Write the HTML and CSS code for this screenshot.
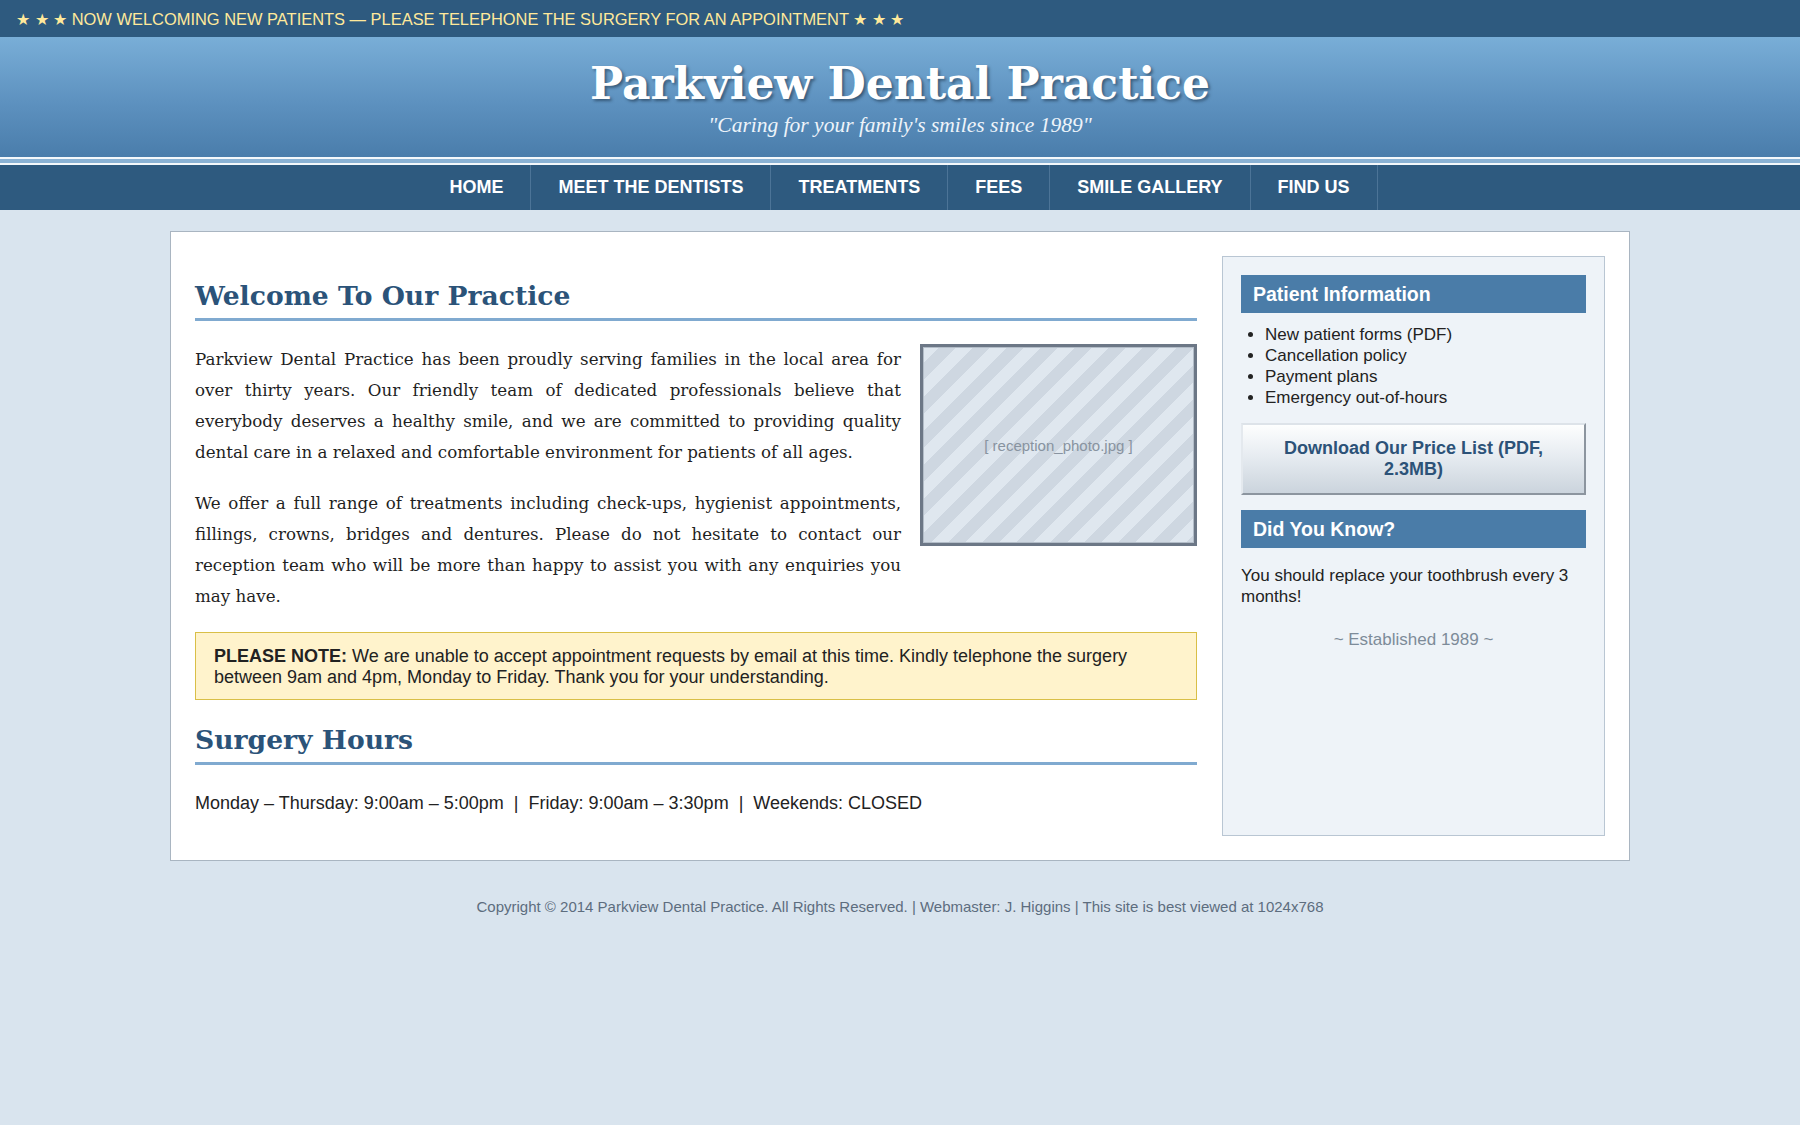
FILE: index.html
```html
<!DOCTYPE html>
<html lang="en">
<head>
<meta charset="utf-8">
<title>Parkview Dental Practice</title>
<link rel="stylesheet" href="styles.css">
</head>
<body>
  <div class="announce">&#9733; &#9733; &#9733; NOW WELCOMING NEW PATIENTS &mdash; PLEASE TELEPHONE THE SURGERY FOR AN APPOINTMENT &#9733; &#9733; &#9733;</div>

  <header class="masthead">
    <h1 class="site-title">Parkview Dental Practice</h1>
    <p class="tagline">"Caring for your family's smiles since 1989"</p>
  </header>
  <div class="masthead-rule"></div>

  <nav class="mainnav">
    <a href="#">HOME</a>
    <a href="#">MEET THE DENTISTS</a>
    <a href="#">TREATMENTS</a>
    <a href="#">FEES</a>
    <a href="#">SMILE GALLERY</a>
    <a href="#">FIND US</a>
  </nav>

  <div class="page">
    <main class="content">
      <h2 class="section-title">Welcome To Our Practice</h2>
      <div class="photo"><span>[ reception_photo.jpg ]</span></div>
      <p class="copy">Parkview Dental Practice has been proudly serving families in the local area for over thirty years. Our friendly team of dedicated professionals believe that everybody deserves a healthy smile, and we are committed to providing quality dental care in a relaxed and comfortable environment for patients of all ages.</p>
      <p class="copy">We offer a full range of treatments including check-ups, hygienist appointments, fillings, crowns, bridges and dentures. Please do not hesitate to contact our reception team who will be more than happy to assist you with any enquiries you may have.</p>

      <div class="notice"><strong>PLEASE NOTE:</strong> We are unable to accept appointment requests by email at this time. Kindly telephone the surgery between 9am and 4pm, Monday to Friday. Thank you for your understanding.</div>

      <h2 class="section-title">Surgery Hours</h2>
      <p class="hours">Monday &ndash; Thursday: 9:00am &ndash; 5:00pm &nbsp;|&nbsp; Friday: 9:00am &ndash; 3:30pm &nbsp;|&nbsp; Weekends: CLOSED</p>
    </main>

    <aside class="sidebar">
      <h3 class="side-title">Patient Information</h3>
      <ul class="side-list">
        <li>New patient forms (PDF)</li>
        <li>Cancellation policy</li>
        <li>Payment plans</li>
        <li>Emergency out-of-hours</li>
      </ul>
      <a class="download" href="#">Download Our Price List (PDF, 2.3MB)</a>
      <h3 class="side-title">Did You Know?</h3>
      <p class="side-text">You should replace your toothbrush every 3 months!</p>
      <p class="established">~ Established 1989 ~</p>
    </aside>
  </div>

  <footer class="footer">Copyright &copy; 2014 Parkview Dental Practice. All Rights Reserved. | Webmaster: J. Higgins | This site is best viewed at 1024x768</footer>
</body>
</html>
```

FILE: styles.css
```css
/* Parkview Dental Practice - main stylesheet */

body {
  margin: 0;
  background: #d9e4ee;
  font-family: "Liberation Sans", Arial, sans-serif;
  color: #222;
}

/* announcement strip */
.announce {
  height: 36px;
  padding: 1px 16px 0;
  line-height: 37px;
  overflow: hidden;
  background: #2e5a7f;
  color: #ffe99b;
  font-size: 16.45px;
  white-space: nowrap;
}

/* masthead */
.masthead {
  background: linear-gradient(to bottom, #79aed7 0%, #5d91bf 55%, #4a7dab 100%);
  text-align: center;
  padding: 20px 0 19px;
}

.site-title {
  margin: 0;
  font-family: "DejaVu Serif", Georgia, serif;
  font-weight: bold;
  font-size: 44px;
  line-height: 53px;
  color: #fff;
  text-shadow: 2px 2px 3px rgba(20, 40, 60, 0.55);
}

.tagline {
  margin: 2px 0 0;
  font-family: "Liberation Serif", Georgia, serif;
  font-style: italic;
  font-size: 21.5px;
  line-height: 26px;
  color: #eef4fa;
}

.masthead-rule {
  height: 4px;
  background: #8ab2d4;
  border-top: 2px solid #f4f8fb;
  border-bottom: 2px solid #f4f8fb;
}

/* main navigation */
.mainnav {
  display: flex;
  justify-content: center;
  background: #2e5a7f;
  height: 45px;
}

.mainnav a {
  display: block;
  padding: 0 27px;
  line-height: 45px;
  border-right: 1px solid #4c7497;
  color: #fff;
  font-weight: bold;
  font-size: 18px;
  text-decoration: none;
}

/* page body */
.page {
  box-sizing: border-box;
  width: 1460px;
  margin: 21px auto 0;
  padding: 24px;
  display: flex;
  gap: 25px;
  background: #fff;
  border: 1px solid #a9b5c1;
}

.content {
  flex: 0 0 1002px;
}

.section-title {
  margin: 24px 0 23px;
  padding-bottom: 6px;
  border-bottom: 3px solid #80aad0;
  font-family: "DejaVu Serif", Georgia, serif;
  font-weight: bold;
  font-size: 26.6px;
  line-height: 32px;
  color: #2b5379;
}

.photo {
  float: right;
  box-sizing: border-box;
  width: 277px;
  height: 202px;
  margin: 0 0 10px 19px;
  border: 3px solid #6c7786;
  box-shadow: inset 0 0 0 1px #b3bdc8;
  background: repeating-linear-gradient(135deg, #dfe7ef 0 12px, #ced7e1 12px 24px);
  display: flex;
  align-items: center;
  justify-content: center;
}

.photo span {
  font-size: 15px;
  color: #8893a0;
}

.copy {
  margin: 0 0 20px;
  font-family: "DejaVu Serif", Georgia, serif;
  font-size: 16.7px;
  line-height: 31px;
  text-align: justify;
  color: #1f1f1f;
}

.notice {
  clear: both;
  padding: 13px 18px 12px;
  border: 1px solid #d9bf47;
  background: #fff3cc;
  font-size: 18px;
  line-height: 20.7px;
  color: #222;
}

.hours {
  margin: 0 0 17px;
  font-size: 18px;
  line-height: 31px;
  color: #222;
}

/* sidebar */
.sidebar {
  flex: 0 0 383px;
  box-sizing: border-box;
  padding: 18px;
  background: #eef3f8;
  border: 1px solid #b9c6d3;
}

.side-title {
  margin: 0;
  padding: 7px 12px;
  background: #4a7ca8;
  color: #fff;
  font-size: 19.5px;
  line-height: 24px;
  font-weight: bold;
}

.side-list {
  margin: 11px 0 15px;
  padding-left: 24px;
  font-size: 17px;
  line-height: 21px;
}

.download {
  display: block;
  margin: 0 0 15px;
  padding: 13px 10px;
  border: 2px solid;
  border-color: #dde3e9 #8c959f #8c959f #e4e9ee;
  background: linear-gradient(to bottom, #fdfefe 0%, #e7ecf1 45%, #cbd4dd 100%);
  text-align: center;
  color: #2c5278;
  font-weight: bold;
  font-size: 18px;
  line-height: 21px;
  text-decoration: none;
}

.side-text {
  margin: 17px 0 0;
  font-size: 17px;
  line-height: 21px;
}

.established {
  margin: 22px 0 0;
  text-align: center;
  font-size: 17px;
  line-height: 21px;
  color: #7d8b99;
}

/* footer */
.footer {
  margin-top: 36px;
  text-align: center;
  font-size: 15px;
  line-height: 20px;
  color: #5d6d7e;
}
```
